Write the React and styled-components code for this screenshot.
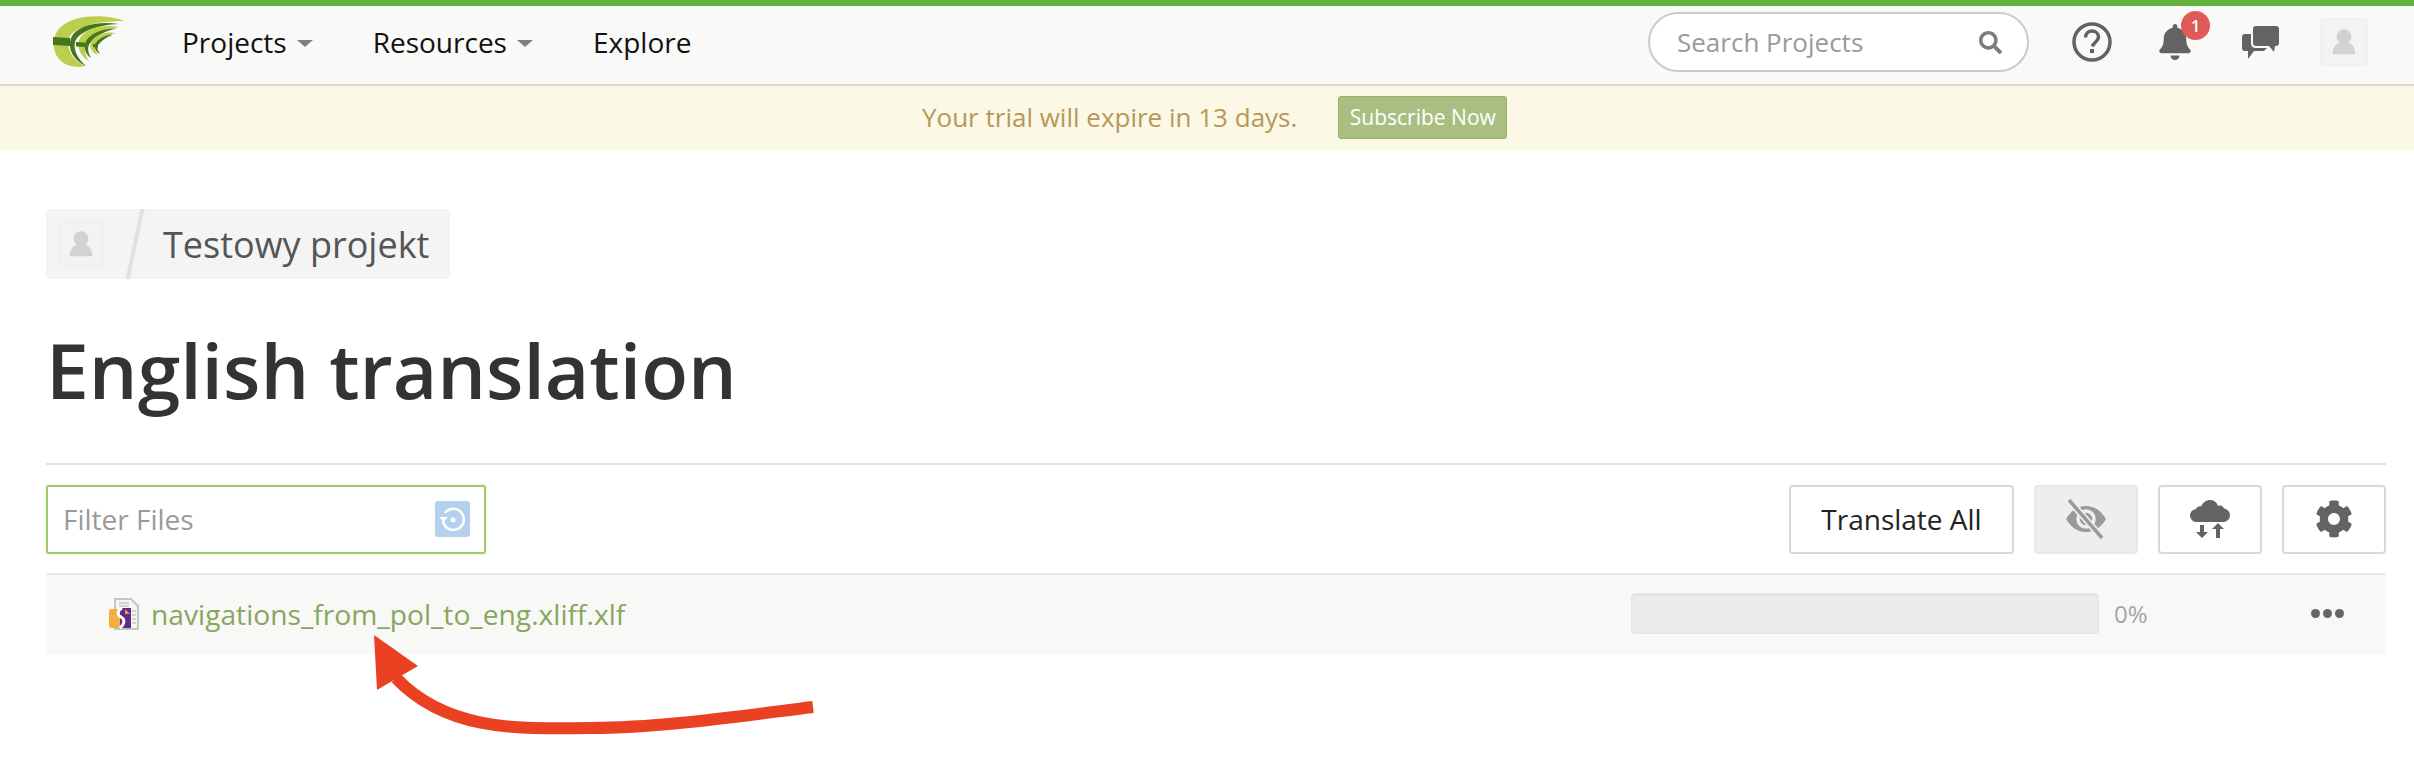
import React from 'react'
import styled, { createGlobalStyle } from 'styled-components'
import { FaBell, FaSearch, FaCog } from 'react-icons/fa'

const GlobalStyle = createGlobalStyle`
  html, body {
    margin: 0;
    background: #fff;
    font-family: 'Open Sans', 'Liberation Sans', sans-serif;
  }
  * { box-sizing: border-box; }
`
const Page = styled.div`
  position: relative;
  width: 2414px;
  height: 778px;
  overflow: hidden;
`
const Header = styled.header`
  display: flex;
  align-items: center;
  height: 86px;
  background: #f9f9f7;
  border-top: 6px solid #62b23c;
  border-bottom: 2px solid #d8d8d5;
  padding: 0 46px 6px 53px;
`
const Logo = styled.svg`
  width: 72px;
  height: 52px;
  flex: none;
`
const Nav = styled.nav`
  display: flex;
  align-items: center;
  margin-left: 57px;
  gap: 60px;
  flex: 1;
`
const NavItem = styled.a`
  display: flex;
  align-items: center;
  gap: 10px;
  font-size: 28px;
  color: #111;
`
const Caret = styled.span`
  width: 0;
  height: 0;
  margin-top: 2px;
  border-left: 8px solid transparent;
  border-right: 8px solid transparent;
  border-top: 7px solid #808080;
`
const SearchBox = styled.div`
  display: flex;
  align-items: center;
  width: 381px;
  height: 60px;
  padding: 0 25px 0 27px;
  background: #fff;
  border: 2px solid #cbcbcb;
  border-radius: 30px;
  color: #7d7d7d;
  font-size: 23px;
`
const SearchInput = styled.input`
  flex: 1;
  min-width: 0;
  border: 0;
  outline: 0;
  padding: 0;
  background: transparent;
  font: 26px 'Open Sans', sans-serif;
  color: #333;
  &::placeholder { color: #9a9a9a; opacity: 1; }
`
const HeaderIcons = styled.div`
  display: flex;
  align-items: center;
  margin-left: 42px;
`
const IconSlot = styled.div`
  position: relative;
  display: flex;
  align-items: center;
  justify-content: center;
  width: ${p => p.$w}px;
  margin-left: ${p => p.$gap}px;
  color: #636361;
  font-size: 36px;
`
const Badge = styled.span`
  position: absolute;
  top: -13px;
  right: -3px;
  display: flex;
  align-items: center;
  justify-content: center;
  width: 29px;
  height: 29px;
  border-radius: 50%;
  background: #e05b57;
  color: #fff;
  font-size: 16px;
  font-weight: 600;
`
const AvatarBox = styled.div`
  display: flex;
  align-items: center;
  justify-content: center;
  flex: none;
  width: ${p => p.$size}px;
  height: ${p => p.$size}px;
  margin-left: ${p => p.$gap || 0}px;
  background: #f3f3f1;
  border: 2px solid #f0f0ee;
  border-radius: 4px;
`
const Banner = styled.div`
  display: flex;
  align-items: center;
  height: 64px;
  padding: 0 0 2px 922px;
  background: #fbf8e6;
  gap: 41px;
`
const BannerText = styled.span`
  font-size: 26px;
  color: #b8975a;
`
const Subscribe = styled.button`
  height: 43px;
  width: 169px;
  padding: 0;
  font: 21px 'Open Sans', sans-serif;
  color: #fff;
  background: #a9bf82;
  border: 1px solid #97b06c;
  border-radius: 3px;
`
const Main = styled.main`
  padding: 59px 28px 0 46px;
`
const Crumb = styled.div`
  display: inline-flex;
  align-items: center;
  height: 70px;
  width: 404px;
  padding-left: 12px;
  background: #f4f4f4;
  border-radius: 4px;
  overflow: hidden;
`
const CrumbSlash = styled.span`
  width: 4px;
  height: 76px;
  margin: 0 26px 0 29px;
  background: #e0e0df;
  transform: rotate(12deg);
  flex: none;
`
const CrumbText = styled.span`
  font-size: 36px;
  color: #555;
  white-space: nowrap;
`
const Title = styled.h1`
  margin: 36px 0 0;
  font-size: 76.800px;
  line-height: 110px;
  font-weight: 600;
  color: #333;
`
const Toolbar = styled.div`
  display: flex;
  align-items: center;
  justify-content: space-between;
  height: 112px;
  margin-top: 38px;
  border-top: 2px solid #e4e4e4;
  border-bottom: 2px solid #e8e8e6;
`
const Filter = styled.div`
  display: flex;
  align-items: center;
  width: 440px;
  height: 69px;
  padding: 0 14px 0 15px;
  border: 2px solid #a3c76d;
  border-radius: 3px;
  box-shadow: 0 0 3px rgba(163, 199, 109, 0.4);
`
const FilterInput = styled(SearchInput)`
  font-size: 28px;
`
const ResetButton = styled.div`
  display: flex;
  align-items: center;
  justify-content: center;
  width: 35px;
  height: 36px;
  background: #b3d0ec;
  border-radius: 3px;
`
const Actions = styled.div`
  display: flex;
  gap: 20px;
`
const ActionButton = styled.button`
  display: flex;
  align-items: center;
  justify-content: center;
  width: ${p => p.$w}px;
  height: 69px;
  padding: 0;
  background: ${p => (p.$off ? '#eeeeed' : '#fff')};
  border: 2px solid ${p => (p.$off ? '#e8e8e8' : '#d8d8d8')};
  border-radius: 4px;
  font: 28px 'Open Sans', sans-serif;
  color: #222;
`
const FileRow = styled.div`
  display: flex;
  align-items: center;
  height: 79px;
  padding: 0 0 2px 63px;
  background: #f8f8f6;
`
const FileIcon = styled.svg`
  width: 31px;
  height: 32px;
  flex: none;
`
const FileLink = styled.a`
  margin-left: 11px;
  font-size: 28.2px;
  color: #87a75c;
`
const Progress = styled.div`
  width: 468px;
  height: 41px;
  margin-left: auto;
  background: #ebebea;
  border: 1px solid #e5e5e4;
  border-radius: 4px;
  box-shadow: inset 0 2px 2px rgba(0, 0, 0, 0.03);
`
const Percent = styled.span`
  width: 197px;
  margin-left: 15px;
  font-size: 24px;
  color: #a5a5a5;
`
const Dots = styled.div`
  display: flex;
  gap: 3px;
  margin-right: 42px;
`
const Dot = styled.span`
  width: 9px;
  height: 9px;
  border-radius: 50%;
  background: #666;
`
const Arrow = styled.svg`
  position: absolute;
  left: 0;
  top: 0;
  pointer-events: none;
`

const Person = ({ size }) => (
  <svg width={size} height={size} viewBox="0 0 32 32">
    <circle cx="16" cy="10" r="8.500" fill="#d2d2d2" />
    <path d="M3 30c0-9 5-12.500 9-13.500c2 2 6 2 8 0c4 1 9 4.500 9 13.500z" fill="#d2d2d2" />
  </svg>
)

const App = () => (
  <Page>
    <GlobalStyle />
    <Header>
      <Logo viewBox="0 0 72 52">
        <path d="M72 5C55-1 25-3 9 10-2 19-2 36 8 45c7 6 17 7 24 5C22 46 16 38 15 27 15 14 35 5 72 5z" fill="#bccf4c" />
        <path d="M66 8C45 5 24 9 18 22c-4 11 3 23 15 28C25 43 20 34 22 26 26 15 45 9 66 8z" fill="#47761f" />
        <path d="M66 11C50 8 33 12 27 22c-4 8 0 18 9 23C31 38 31 30 35 25 40 18 50 13 66 11z" fill="#bccf4c" />
        <path d="M64 12.500C50 12 38 17 33 25c-3 7 0 14 5 17C35 37 34 31 37 27 42 20 52 15 64 12.500z" fill="#47761f" />
        <path d="M63 17C52 15 42 19 38 26c-2 6 1 11 7 13C42 35 41 31 44 27 48 22 55 19 63 17z" fill="#bccf4c" />
        <path d="M60 18.500C52 19 45 23 42 28c-1 4 1 8 5 10C44 34 43.500 30 46 28 49 24 54 21 60 18.500z" fill="#47761f" />
        <path d="M0 21l17 1v8L0 29zM23 26l9 .5v4.500l-9-.5zM40 28l5 .5v3l-5-.5z" fill="#47761f" />
      </Logo>
      <Nav>
        <NavItem>Projects <Caret /></NavItem>
        <NavItem>Resources <Caret /></NavItem>
        <NavItem>Explore</NavItem>
      </Nav>
      <SearchBox>
        <SearchInput placeholder="Search Projects" />
        <FaSearch />
      </SearchBox>
      <HeaderIcons>
        <IconSlot $w={42} $gap={0}>
          <svg width="40" height="40" viewBox="0 0 40 40" fill="none">
            <circle cx="20" cy="20" r="18" stroke="#636361" strokeWidth="3.500" />
            <path d="M13.500 15.500c0-4 3-6.500 6.500-6.500s6.500 2.500 6.500 6c0 4.500-5 5-6 9.500" stroke="#636361" strokeWidth="3.500" />
            <rect x="18" y="27" width="4" height="4" fill="#636361" />
          </svg>
        </IconSlot>
        <IconSlot $w={64} $gap={30}>
          <FaBell />
          <Badge>1</Badge>
        </IconSlot>
        <IconSlot $w={40} $gap={33}>
          <svg width="37" height="33" viewBox="0 0 37 33" fill="#636361">
            <path d="M14 0h20a3 3 0 0 1 3 3v14a3 3 0 0 1-3 3h-1l-1 6-5-6H14a3 3 0 0 1-3-3V3a3 3 0 0 1 3-3z" />
            <path d="M9 8v9c0 3 2 5 5 5h11l-1.500 1.500a3 3 0 0 1-2.500 1.500H12l-6 8v-8H3a3 3 0 0 1-3-3V11a3 3 0 0 1 3-3z" />
          </svg>
        </IconSlot>
        <AvatarBox $size={48} $gap={40}><Person size={28} /></AvatarBox>
      </HeaderIcons>
    </Header>
    <Banner>
      <BannerText>Your trial will expire in 13 days.</BannerText>
      <Subscribe>Subscribe Now</Subscribe>
    </Banner>
    <Main>
      <Crumb>
        <AvatarBox $size={46}><Person size={28} /></AvatarBox>
        <CrumbSlash />
        <CrumbText>Testowy projekt</CrumbText>
      </Crumb>
      <Title>English translation</Title>
      <Toolbar>
        <Filter>
          <FilterInput placeholder="Filter Files" />
          <ResetButton>
            <svg width="27" height="27" viewBox="0 0 27 27" fill="none">
              <path d="M6 7a10.500 10.500 0 1 1-2 8" stroke="#fff" strokeWidth="2.500" />
              <path d="M0 11h9l-4.500 5z" fill="#fff" />
              <circle cx="14" cy="14" r="2.500" fill="#fff" />
            </svg>
          </ResetButton>
        </Filter>
        <Actions>
          <ActionButton $w={225}>Translate All</ActionButton>
          <ActionButton $w={104} $off>
            <svg width="42" height="40" viewBox="0 0 42 40">
              <path d="M1 20C7 10 14 7 21 7s14 3 20 13c-6 10-13 13-20 13S7 30 1 20z" fill="#9a9a98" />
              <circle cx="21" cy="20" r="8" fill="none" stroke="#eeeeed" strokeWidth="3.500" />
              <path d="M4 1l33 38" stroke="#eeeeed" strokeWidth="7" />
              <path d="M4 1l33 38" stroke="#9a9a98" strokeWidth="3.500" />
            </svg>
          </ActionButton>
          <ActionButton $w={104}>
            <svg width="42" height="40" viewBox="0 0 42 40" fill="#636361">
              <path d="M8 23a6.500 6.500 0 0 1-1-13c1-2 3-3 5-2.500C14 3 18 1 21 1c4 0 7 2.500 8 6 2-1 5-.5 6 2.500a6.800 6.800 0 0 1 0 13.500z" />
              <path d="M11 26h4v7h4l-6 6-6-6h4zM27 39v-9h-4l6-6 6 6h-4v9z" />
            </svg>
          </ActionButton>
          <ActionButton $w={104}>
            <FaCog color="#636361" size={38} />
          </ActionButton>
        </Actions>
      </Toolbar>
      <FileRow>
        <FileIcon viewBox="0 0 31 32">
          <path d="M6 1h16l7 7v23H6z" fill="#f4f4f2" stroke="#bccbc2" strokeWidth="2" />
          <path d="M10 5h10M10 8h10M23 13h4M23 17h4M23 21h4M23 25h4" stroke="#c8c8c8" strokeWidth="1.500" />
          <rect x="0" y="11" width="12" height="19" rx="2" fill="#f0b13e" />
          <path d="M11 10h11v20H11z" fill="#64288c" />
          <path d="M13 10c-5 3-5 7-1 9 4 2 4 7-1 11" fill="none" stroke="#fff" strokeWidth="3" />
          <path d="M16 11l5 5h-5z" fill="#e8a23c" />
        </FileIcon>
        <FileLink>navigations_from_pol_to_eng.xliff.xlf</FileLink>
        <Progress />
        <Percent>0%</Percent>
        <Dots><Dot /><Dot /><Dot /></Dots>
      </FileRow>
    </Main>
    <Arrow width="2414" height="778" viewBox="0 0 2414 778">
      <path d="M396 678C450 735 530 728 591 728C660 728 740 716 813 707" fill="none" stroke="#ea4123" strokeWidth="12" />
      <path d="M374 635L418 666L377 690z" fill="#ea4123" />
    </Arrow>
  </Page>
)

export default App
